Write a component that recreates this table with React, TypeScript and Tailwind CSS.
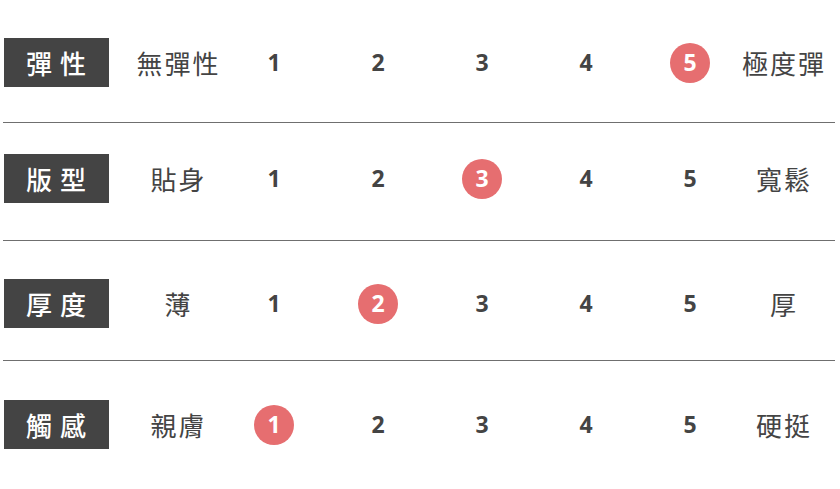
const rows = [
  { label: "彈性", low: "無彈性", high: "極度彈", value: 5, pad: "pt-[38px] pb-[35px] border-b" },
  { label: "版型", low: "貼身", high: "寬鬆", value: 3, pad: "pt-[31px] pb-[37px] border-b" },
  { label: "厚度", low: "薄", high: "厚", value: 2, pad: "pt-[38px] pb-[32px] border-b" },
  { label: "觸感", low: "親膚", high: "硬挺", value: 1, pad: "pt-[39px] pb-[30px]" },
];

function Scale({ value }: { value: number }) {
  return (
    <>
      {[1, 2, 3, 4, 5].map((n) => (
        <div key={n} className="w-[104px] flex items-center justify-center">
          {n === value ? (
            <span className="w-10 h-10 rounded-full bg-[#e66e70] text-white flex items-center justify-center text-[23px] font-bold leading-none font-['Open_Sans','Liberation_Sans',sans-serif]">
              {n}
            </span>
          ) : (
            <span className="text-[23px] font-bold text-[#444] leading-none font-['Open_Sans','Liberation_Sans',sans-serif]">
              {n}
            </span>
          )}
        </div>
      ))}
    </>
  );
}

export default function App() {
  return (
    <div className="w-[840px] h-[489px] bg-white font-['Noto_Sans_CJK_TC','Noto_Sans',sans-serif]">
      {rows.map((row) => (
        <div key={row.label} className={`ml-[3px] w-[832px] border-[#6f6f6f] ${row.pad}`}>
          <div className="flex items-center h-[49px]">
            {/* label tag */}
            <div className="ml-px w-[105px] h-[49px] bg-[#444444] text-white text-[26px] font-medium tracking-[8px] flex items-center justify-center pl-[7px]">
              {row.label}
            </div>
            <div className="w-[113px] pl-[26px] text-center text-[26px] tracking-[2px] text-[#444]">
              {row.low}
            </div>
            <Scale value={row.value} />
            <div className="w-[84px] text-center text-[26px] tracking-[2px] text-[#444]">
              {row.high}
            </div>
          </div>
        </div>
      ))}
    </div>
  );
}
